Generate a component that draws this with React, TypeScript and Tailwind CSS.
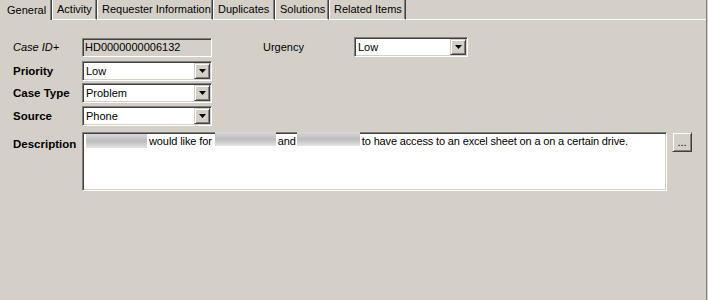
import React from 'react';

const sunken =
  'border border-t-[#808080] border-l-[#808080] border-b-white border-r-white shadow-[inset_1px_1px_0_#404040,inset_-1px_-1px_0_#d4d0c8]';
const raised =
  'border border-t-[#d4d0c8] border-l-[#d4d0c8] border-b-[#404040] border-r-[#404040] shadow-[inset_1px_1px_0_#ffffff,inset_-1px_-1px_0_#808080]';

const tabs = [
  { name: 'Activity', w: 'w-[45px]' },
  { name: 'Requester Information', w: 'w-[116px]' },
  { name: 'Duplicates', w: 'w-[62px]' },
  { name: 'Solutions', w: 'w-[54px]' },
  { name: 'Related Items', w: 'w-[77px]' },
];

const Combo = ({ value, width }: { value: string; width: string }) => (
  <div className={`${width} h-[20px] bg-white ${sunken} flex items-center`}>
    <span className="flex-1 pl-[3px] leading-none">{value}</span>
    <div className={`w-[16px] h-[16px] mr-[1px] bg-[#d4d0c8] ${raised} flex items-center justify-center`}>
      <svg width="7" height="4" viewBox="0 0 7 4">
        <polygon points="0,0 7,0 3.5,4" fill="#000" />
      </svg>
    </div>
  </div>
);

const Blur = ({ width }: { width: string }) => (
  <span
    className={`${width} h-[14px] inline-block bg-gradient-to-b from-[#d8d8d8] via-[#bcbcbc] to-[#e4e4e4] blur-[0.6px]`}
  />
);

export default function App() {
  return (
    <div className="w-[708px] h-[300px] bg-[#d4d0c8] font-['Liberation_Sans',Arial,sans-serif] text-[11px] text-black overflow-hidden flex">
      <div className="w-[707px] h-full border-r border-[#808080] flex flex-col">
        {/* Tabs */}
        <div className="flex h-[20px]">
          <div className="w-[52px] h-[20px] pl-[7px] flex items-center border-r border-r-[#404040] shadow-[inset_-1px_0_0_#808080]">
            General
          </div>
          {tabs.map((t) => (
            <div
              key={t.name}
              className={`${t.w} h-[20px] pl-[4px] flex items-center whitespace-nowrap overflow-hidden border-l border-l-white border-r border-r-[#404040] border-b border-b-white shadow-[inset_-1px_0_0_#808080]`}
            >
              {t.name}
            </div>
          ))}
          <div className="flex-1 h-[20px] border-b border-b-white" />
        </div>

        {/* Form */}
        <div className="pl-[13px] flex flex-col">
          <div className="mt-[17px] flex items-center h-[20px]">
            <div className="w-[69px] italic">Case ID+</div>
            <div className={`w-[130px] h-[19px] bg-[#d4d0c8] ${sunken} flex items-center pl-[2px]`}>
              HD0000000006132
            </div>
            <div className="ml-[51px] w-[91px]">Urgency</div>
            <Combo value="Low" width="w-[114px]" />
          </div>

          <div className="mt-[4px] flex items-center h-[20px]">
            <div className="w-[69px] font-bold text-[11.5px] pt-[1px]">Priority</div>
            <Combo value="Low" width="w-[130px]" />
          </div>
          <div className="mt-[2px] flex items-center h-[20px]">
            <div className="w-[69px] font-bold text-[11.5px] pt-[1px]">Case Type</div>
            <Combo value="Problem" width="w-[130px]" />
          </div>
          <div className="mt-[3px] flex items-center h-[20px]">
            <div className="w-[69px] font-bold text-[11.5px] pt-[1px]">Source</div>
            <Combo value="Phone" width="w-[130px]" />
          </div>

          <div className="mt-[6px] flex items-start">
            <div className="w-[69px] font-bold text-[11.5px] pt-[4px]">Description</div>
            <div className={`w-[585px] h-[59px] bg-white ${sunken} pl-[3px] pt-[1px]`}>
              <div className="flex items-center h-[14px] whitespace-nowrap tracking-[-0.1px]">
                <Blur width="w-[61px]" />
                <span className="ml-[2px]">would like for</span>
                <span className="ml-[3px]">
                  <Blur width="w-[61px]" />
                </span>
                <span className="ml-[2px]">and</span>
                <span className="ml-[1px]">
                  <Blur width="w-[63px]" />
                </span>
                <span className="ml-[2px] tracking-[-0.15px]">to have access to an excel sheet on a on a certain drive.</span>
              </div>
            </div>
            <div className={`ml-[5px] w-[20px] h-[20px] bg-[#d4d0c8] ${raised} flex items-end justify-center pb-[3px] leading-none`}>
              ...
            </div>
          </div>
        </div>
      </div>
    </div>
  );
}
